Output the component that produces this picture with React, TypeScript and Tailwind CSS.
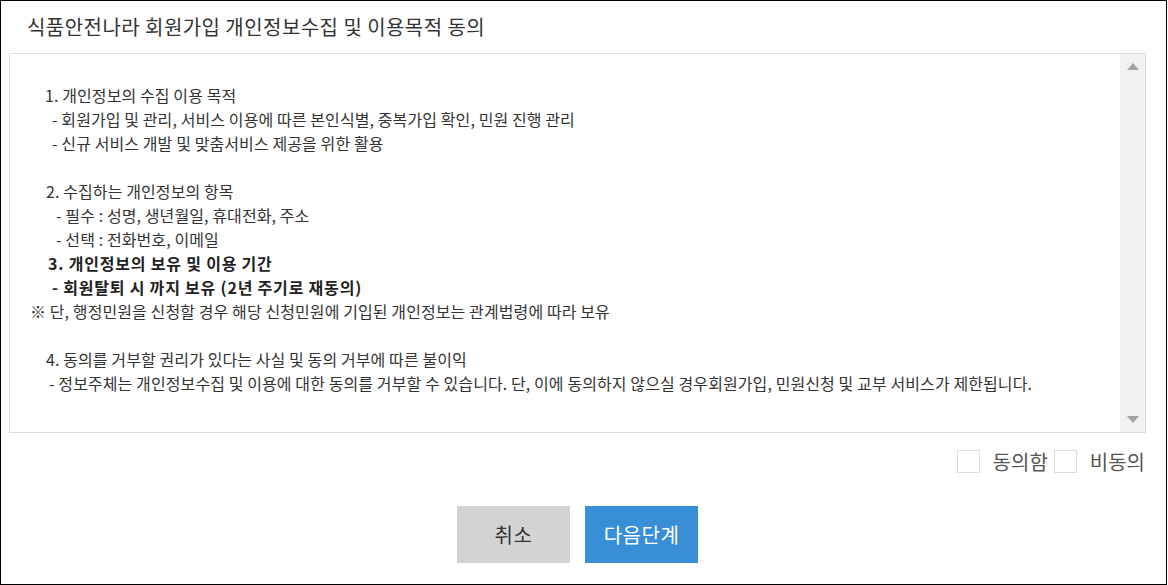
const font = { fontFamily: '"Malgun Gothic", "Noto Sans CJK KR", "Noto Sans", sans-serif' };

type Line = { text: string; indent: string; bold?: boolean };

const lines: Line[] = [
    { text: "", indent: "pl-0" },
    { text: "1. 개인정보의 수집 이용 목적", indent: "pl-[35px]" },
    { text: "- 회원가입 및 관리, 서비스 이용에 따른 본인식별, 중복가입 확인, 민원 진행 관리", indent: "pl-[42px]" },
    { text: "- 신규 서비스 개발 및 맞춤서비스 제공을 위한 활용", indent: "pl-[42px]" },
    { text: "", indent: "pl-0" },
    { text: "2. 수집하는 개인정보의 항목", indent: "pl-[36px]" },
    { text: "- 필수 : 성명, 생년월일, 휴대전화, 주소", indent: "pl-[46px]" },
    { text: "- 선택 : 전화번호, 이메일", indent: "pl-[46px]" },
    { text: "3. 개인정보의 보유 및 이용 기간", indent: "pl-[38px]", bold: true },
    { text: "- 회원탈퇴 시 까지 보유 (2년 주기로 재동의)", indent: "pl-[42px]", bold: true },
    { text: "※ 단, 행정민원을 신청할 경우 해당 신청민원에 기입된 개인정보는 관계법령에 따라 보유", indent: "pl-[20px]" },
    { text: "", indent: "pl-0" },
    { text: "4. 동의를 거부할 권리가 있다는 사실 및 동의 거부에 따른 불이익", indent: "pl-[36px]" },
    { text: "- 정보주체는 개인정보수집 및 이용에 대한 동의를 거부할 수 있습니다. 단, 이에 동의하지 않으실 경우회원가입, 민원신청 및 교부 서비스가 제한됩니다.", indent: "pl-[39px]" },
];

function Checkbox({ label }: { label: string }) {
    return (
        <label className="flex items-center gap-[13px] cursor-pointer select-none">
            <span className="size-[23px] border border-[#dcdcdc] bg-white" />
            <span className="text-[20px] text-[#555] leading-none">{label}</span>
        </label>
    );
}

export default function App() {
    return (
        <div className="w-[1167px] h-[585px] border border-black bg-white flex flex-col" style={font}>
            {/* Title */}
            <h1 className="pl-[26px] pt-[11px] h-[52px] text-[20px] tracking-[0.45px] font-normal text-[#333] leading-[30px]">
                식품안전나라 회원가입 개인정보수집 및 이용목적 동의
            </h1>

            {/* Terms box */}
            <div className="ml-[8px] w-[1137px] h-[380px] border border-[#dddddd] flex">
                <div className="flex-1 pt-[5px] text-[16px] text-[#333] overflow-hidden">
                    {lines.map((line, i) => (
                        <p
                            key={`line-${i}`}
                            className={`h-[24px] leading-[24px] whitespace-nowrap ${line.indent} ${line.bold ? "font-bold tracking-[0.8px] text-[#222]" : "tracking-[0.1px]"}`}
                        >
                            {line.text}
                        </p>
                    ))}
                </div>

                {/* Scrollbar */}
                <div className="w-[25px] bg-[#f1f1f1] flex flex-col items-center justify-between py-[9px]">
                    <svg width="12" height="7" viewBox="0 0 12 7">
                        <polygon points="6,0 12,7 0,7" fill="#a3a3a3" />
                    </svg>
                    <svg width="12" height="7" viewBox="0 0 12 7">
                        <polygon points="0,0 12,0 6,7" fill="#a3a3a3" />
                    </svg>
                </div>
            </div>

            {/* Agree */}
            <div className="flex justify-end gap-[6px] pr-[21px] pt-[17px]">
                <Checkbox label="동의함" />
                <Checkbox label="비동의" />
            </div>

            {/* Buttons */}
            <div className="flex justify-center gap-[15px] mt-[33px] pr-[12px]">
                <button className="w-[113px] h-[57px] bg-[#d3d3d3] text-[20px] tracking-[0.5px] text-[#333]">취소</button>
                <button className="w-[113px] h-[57px] bg-[#398ed8] text-[20px] tracking-[0.5px] text-white">다음단계</button>
            </div>
        </div>
    );
}
